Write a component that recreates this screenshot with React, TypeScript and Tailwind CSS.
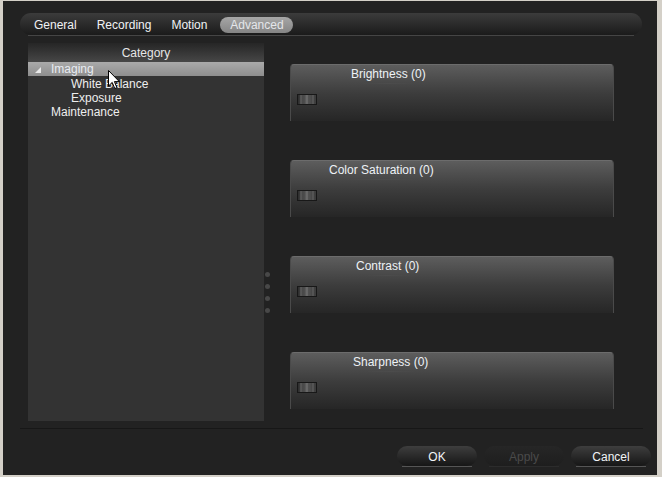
const tabs = ['General', 'Recording', 'Motion'];

const sliders = [
  { label: 'Brightness (0)', offset: 'ml-[60px]' },
  { label: 'Color Saturation (0)', offset: 'ml-[38px]' },
  { label: 'Contrast (0)', offset: 'ml-[65px]' },
  { label: 'Sharpness (0)', offset: 'ml-[62px]' },
];

function Thumb() {
  return (
    <svg width="20" height="11" viewBox="0 0 20 11" className="block">
      <defs>
        <linearGradient id="thumbg" x1="0" y1="0" x2="1" y2="0">
          <stop offset="0" stopColor="#2a2a2a" />
          <stop offset="0.4" stopColor="#5a5a5a" />
          <stop offset="1" stopColor="#3a3a3a" />
        </linearGradient>
      </defs>
      <rect x="0.5" y="0.5" width="19" height="10" fill="url(#thumbg)" stroke="#181818" />
      <line x1="4" y1="1" x2="4" y2="10" stroke="#6a6a6a" />
      <line x1="7" y1="1" x2="7" y2="10" stroke="#444" />
      <line x1="10" y1="1" x2="10" y2="10" stroke="#7a7a7a" />
      <line x1="13" y1="1" x2="13" y2="10" stroke="#505050" />
      <line x1="16" y1="1" x2="16" y2="10" stroke="#666" />
    </svg>
  );
}

function SliderPanel({ label, offset }: { label: string; offset: string }) {
  return (
    <div className="h-[57px] rounded-t-[4px] border-t border-x border-t-[#6c6c6c] border-x-[#4a4a4a] bg-linear-to-b from-[#5d5d5d] via-[#3d3d3d] to-[#262626]">
      <div className={`${offset} inline-flex flex-col items-center`}>
        <span className="leading-[14px] text-[#eef2f6]">{label}</span>
        <span className="mt-[2px] h-px w-[70%] bg-linear-to-r from-transparent via-[#4c4c4c] to-transparent" />
      </div>
      <div className="ml-[6px] mt-[10px]">
        <Thumb />
      </div>
    </div>
  );
}

function Button({ label, disabled }: { label: string; disabled?: boolean }) {
  return (
    <div className="flex w-[80px] flex-col">
      <div
        className={
          disabled
            ? 'flex h-[20px] items-center justify-center rounded-full bg-linear-to-b from-[#262626] to-[#1e1e1e] pt-px text-[#4a4a4a]'
            : 'flex h-[20px] items-center justify-center rounded-full bg-linear-to-b from-[#3e3e3e] via-[#2a2a2a] to-[#161616] pt-px text-[#f2f4f6]'
        }
      >
        {label}
      </div>
      <div className={disabled ? 'mx-[5px] h-px bg-[#2c2c2c]' : 'mx-[5px] h-px bg-[#555555]'} />
    </div>
  );
}

export default function App() {
  return (
    <div className="relative h-[477px] w-[662px] overflow-hidden border-t border-r-[5px] border-b-2 border-l-[3px] border-[#d4d0c8] bg-[#222222] font-['Liberation_Sans',Arial,sans-serif] text-[12px] text-[#eeeeee]">
      {/* tab strip */}
      <div className="ml-[17px] mt-[12px] w-[622px]">
        <div className="flex h-[22px] items-center gap-[2px] rounded-[11px] bg-linear-to-b from-[#3c3c3c] via-[#2b2b2b] to-[#1b1b1b] pl-[5px] pt-px">
          {tabs.map((t) => (
            <div key={t} className="px-[9px] text-[#f0f2f4]">
              {t}
            </div>
          ))}
          <div className="ml-[2px] flex h-[16px] w-[73px] items-center justify-center rounded-full bg-linear-to-b from-[#a6a6a6] to-[#858585] text-[#e4e6ea]">
            Advanced
          </div>
        </div>
        <div className="mx-[8px] h-px bg-[#454545]" />
      </div>

      {/* body */}
      <div className="ml-[25px] mt-[7px] flex">
        <div className="flex h-[378px] w-[236px] flex-col bg-[#333333]">
          <div className="flex h-[19px] items-center justify-center bg-linear-to-b from-[#262626] to-[#474747] pt-px text-[#e6e6e6]">
            Category
          </div>
          <div className="flex h-[14px] items-center bg-linear-to-b from-[#aaaaaa] to-[#8e8e8e] pl-[7px] pt-px leading-[13px] text-[#e8ecf2]">
            <svg width="6" height="6" viewBox="0 0 6 6" className="mr-[10px]">
              <polygon points="6,0 6,6 0,6" fill="#e8e8e8" />
            </svg>
            Imaging
          </div>
          <div className="h-[14px] pl-[43px] pt-px leading-[14px]">White Balance</div>
          <div className="h-[14px] pl-[43px] pt-px leading-[14px]">Exposure</div>
          <div className="h-[14px] pl-[23px] pt-px leading-[14px]">Maintenance</div>
        </div>

        <div className="flex w-[26px] flex-col items-start gap-[7px] pl-px pt-[229px]">
          <div className="h-[5px] w-[5px] rounded-full bg-[#484848]" />
          <div className="h-[5px] w-[5px] rounded-full bg-[#484848]" />
          <div className="h-[5px] w-[5px] rounded-full bg-[#484848]" />
          <div className="h-[5px] w-[5px] rounded-full bg-[#484848]" />
        </div>

        <div className="flex w-[324px] flex-col gap-[39px] pt-[21px]">
          {sliders.map((s) => (
            <SliderPanel key={s.label} label={s.label} offset={s.offset} />
          ))}
        </div>
      </div>

      {/* separator */}
      <div className="ml-[17px] mt-[7px] h-px w-[623px] bg-[#171717]" />

      {/* buttons */}
      <div className="mt-[17px] flex justify-end gap-[7px] pr-[6px]">
        <Button label="OK" />
        <Button label="Apply" disabled />
        <Button label="Cancel" />
      </div>

      {/* mouse pointer */}
      <svg width="12" height="20" viewBox="0 0 12 20" className="absolute left-[105px] top-[69px]">
        <path d="M0.5 0.5 L0.5 16 L4.2 12.4 L6.8 18.5 L8.9 17.6 L6.4 11.6 L11.3 11.6 Z" fill="#ffffff" stroke="#000000" strokeWidth="1" />
      </svg>
    </div>
  );
}
